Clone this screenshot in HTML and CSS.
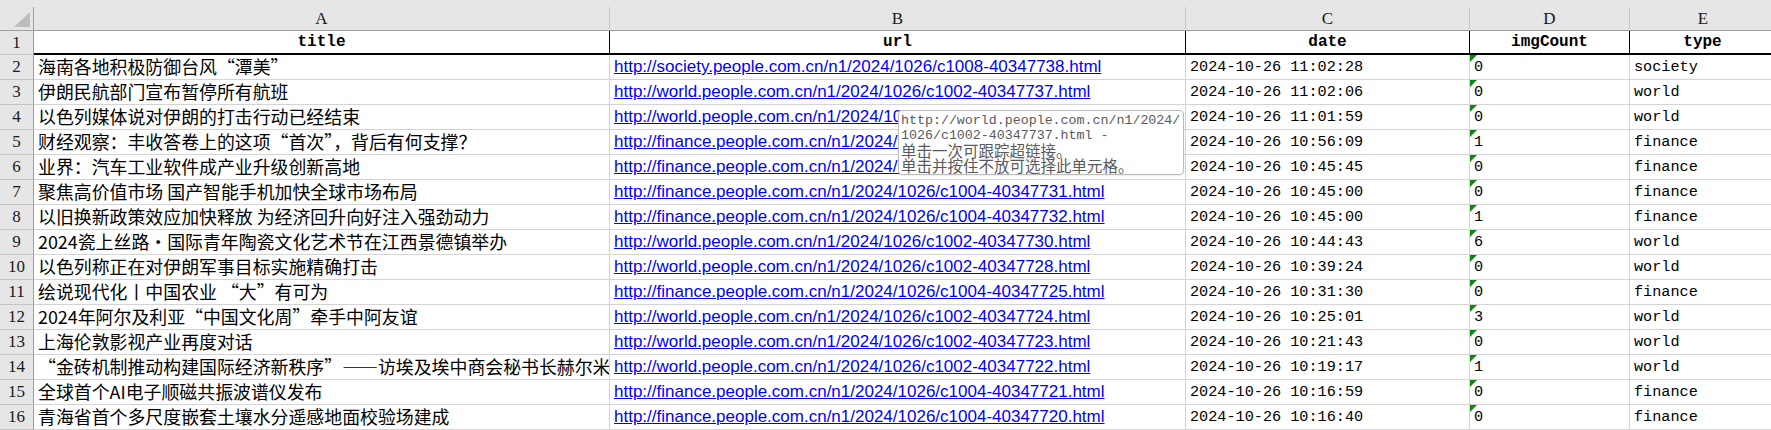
FILE: index.html
```html
<!DOCTYPE html>
<html lang="zh-CN">
<head>
<meta charset="utf-8">
<title>sheet</title>
<link rel="stylesheet" href="styles.css">
</head>
<body>
<div class="band"></div>
<div class="sheet">
  <div class="corner"><svg width="34" height="23" viewBox="0 0 34 23"><polygon points="14,20 30,20 30,5" fill="#bdbdbd"/></svg></div>
  <div class="colhead">A</div>
  <div class="colhead">B</div>
  <div class="colhead">C</div>
  <div class="colhead">D</div>
  <div class="colhead last">E</div>

  <div class="rowhead r1">1</div>
  <div class="hcell">title</div>
  <div class="hcell">url</div>
  <div class="hcell">date</div>
  <div class="hcell">imgCount</div>
  <div class="hcell">type</div>

  <div class="rowhead">2</div>
  <div class="cell t">海南各地积极防御台风“潭美”</div>
  <div class="cell u"><a>http://society.people.com.cn/n1/2024/1026/c1008-40347738.html</a></div>
  <div class="cell m">2024-10-26 11:02:28</div>
  <div class="cell m n">0</div>
  <div class="cell m">society</div>

  <div class="rowhead">3</div>
  <div class="cell t">伊朗民航部门宣布暂停所有航班</div>
  <div class="cell u"><a>http://world.people.com.cn/n1/2024/1026/c1002-40347737.html</a></div>
  <div class="cell m">2024-10-26 11:02:06</div>
  <div class="cell m n">0</div>
  <div class="cell m">world</div>

  <div class="rowhead">4</div>
  <div class="cell t">以色列媒体说对伊朗的打击行动已经结束</div>
  <div class="cell u"><a>http://world.people.com.cn/n1/2024/1026/c1002-40347736.html</a></div>
  <div class="cell m">2024-10-26 11:01:59</div>
  <div class="cell m n">0</div>
  <div class="cell m">world</div>

  <div class="rowhead">5</div>
  <div class="cell t">财经观察：丰收答卷上的这项“首次”，背后有何支撑？</div>
  <div class="cell u"><a>http://finance.people.com.cn/n1/2024/1026/c1004-40347735.html</a></div>
  <div class="cell m">2024-10-26 10:56:09</div>
  <div class="cell m n">1</div>
  <div class="cell m">finance</div>

  <div class="rowhead">6</div>
  <div class="cell t">业界：汽车工业软件成产业升级创新高地</div>
  <div class="cell u"><a>http://finance.people.com.cn/n1/2024/1026/c1004-40347734.html</a></div>
  <div class="cell m">2024-10-26 10:45:45</div>
  <div class="cell m n">0</div>
  <div class="cell m">finance</div>

  <div class="rowhead">7</div>
  <div class="cell t">聚焦高价值市场 国产智能手机加快全球市场布局</div>
  <div class="cell u"><a>http://finance.people.com.cn/n1/2024/1026/c1004-40347731.html</a></div>
  <div class="cell m">2024-10-26 10:45:00</div>
  <div class="cell m n">0</div>
  <div class="cell m">finance</div>

  <div class="rowhead">8</div>
  <div class="cell t">以旧换新政策效应加快释放 为经济回升向好注入强劲动力</div>
  <div class="cell u"><a>http://finance.people.com.cn/n1/2024/1026/c1004-40347732.html</a></div>
  <div class="cell m">2024-10-26 10:45:00</div>
  <div class="cell m n">1</div>
  <div class="cell m">finance</div>

  <div class="rowhead">9</div>
  <div class="cell t">2024瓷上丝路·国际青年陶瓷文化艺术节在江西景德镇举办</div>
  <div class="cell u"><a>http://world.people.com.cn/n1/2024/1026/c1002-40347730.html</a></div>
  <div class="cell m">2024-10-26 10:44:43</div>
  <div class="cell m n">6</div>
  <div class="cell m">world</div>

  <div class="rowhead">10</div>
  <div class="cell t">以色列称正在对伊朗军事目标实施精确打击</div>
  <div class="cell u"><a>http://world.people.com.cn/n1/2024/1026/c1002-40347728.html</a></div>
  <div class="cell m">2024-10-26 10:39:24</div>
  <div class="cell m n">0</div>
  <div class="cell m">world</div>

  <div class="rowhead">11</div>
  <div class="cell t">绘说现代化丨中国农业 “大”有可为</div>
  <div class="cell u"><a>http://finance.people.com.cn/n1/2024/1026/c1004-40347725.html</a></div>
  <div class="cell m">2024-10-26 10:31:30</div>
  <div class="cell m n">0</div>
  <div class="cell m">finance</div>

  <div class="rowhead">12</div>
  <div class="cell t">2024年阿尔及利亚“中国文化周”牵手中阿友谊</div>
  <div class="cell u"><a>http://world.people.com.cn/n1/2024/1026/c1002-40347724.html</a></div>
  <div class="cell m">2024-10-26 10:25:01</div>
  <div class="cell m n">3</div>
  <div class="cell m">world</div>

  <div class="rowhead">13</div>
  <div class="cell t">上海伦敦影视产业再度对话</div>
  <div class="cell u"><a>http://world.people.com.cn/n1/2024/1026/c1002-40347723.html</a></div>
  <div class="cell m">2024-10-26 10:21:43</div>
  <div class="cell m n">0</div>
  <div class="cell m">world</div>

  <div class="rowhead">14</div>
  <div class="cell t">“金砖机制推动构建国际经济新秩序”——访埃及埃中商会秘书长赫尔米</div>
  <div class="cell u"><a>http://world.people.com.cn/n1/2024/1026/c1002-40347722.html</a></div>
  <div class="cell m">2024-10-26 10:19:17</div>
  <div class="cell m n">1</div>
  <div class="cell m">world</div>

  <div class="rowhead">15</div>
  <div class="cell t">全球首个AI电子顺磁共振波谱仪发布</div>
  <div class="cell u"><a>http://finance.people.com.cn/n1/2024/1026/c1004-40347721.html</a></div>
  <div class="cell m">2024-10-26 10:16:59</div>
  <div class="cell m n">0</div>
  <div class="cell m">finance</div>

  <div class="rowhead">16</div>
  <div class="cell t">青海省首个多尺度嵌套土壤水分遥感地面校验场建成</div>
  <div class="cell u"><a>http://finance.people.com.cn/n1/2024/1026/c1004-40347720.html</a></div>
  <div class="cell m">2024-10-26 10:16:40</div>
  <div class="cell m n">0</div>
  <div class="cell m">finance</div>
</div>
<div class="tip">
  <div class="tl">http://world.people.com.cn/n1/2024/</div>
  <div class="tl">1026/c1002-40347737.html -</div>
  <div class="tc">单击一次可跟踪超链接。</div>
  <div class="tc">单击并按住不放可选择此单元格。</div>
</div>
</body>
</html>
```
FILE: styles.css
```css
html, body {
  margin: 0;
  padding: 0;
  background: #ffffff;
  overflow: hidden;
  width: 1771px;
  height: 430px;
}
body {
  position: relative;
}
.band {
  height: 7px;
  background: #e6e6e6;
}
.sheet {
  display: grid;
  grid-template-columns: 34px 576px 576px 284px 160px 146px;
  grid-template-rows: 24px 24px repeat(15, 25px);
}
.sheet > div {
  box-sizing: border-box;
  overflow: hidden;
  white-space: nowrap;
}
.corner {
  background: #e6e6e6;
  border-right: 1px solid #9e9e9e;
  border-bottom: 1px solid #9e9e9e;
}
.corner svg {
  display: block;
}
.colhead {
  background: #e6e6e6;
  border-right: 1px solid #c6c6c6;
  border-bottom: 1px solid #9e9e9e;
  text-align: center;
  font-family: "Liberation Serif", serif;
  font-size: 17px;
  line-height: 23px;
  color: #1a1a1a;
}
.colhead.last {
  border-right: 0;
}
.rowhead {
  background: #e6e6e6;
  border-right: 1px solid #9e9e9e;
  border-bottom: 1px solid #c6c6c6;
  text-align: center;
  font-family: "Liberation Serif", serif;
  font-size: 17px;
  line-height: 24px;
  color: #1a1a1a;
}
.rowhead.r1 {
  line-height: 23px;
}
.hcell {
  border-right: 1px solid #000000;
  border-bottom: 2px solid #000000;
  text-align: center;
  font-family: "Liberation Mono", monospace;
  font-weight: bold;
  font-size: 16px;
  line-height: 22px;
  color: #000000;
}
.cell {
  border-right: 1px solid #d4d4d4;
  border-bottom: 1px solid #d4d4d4;
  padding: 0 3px 0 4px;
  line-height: 24px;
  color: #000000;
  position: relative;
}
.cell.t {
  font-family: "Noto Sans CJK SC", sans-serif;
  font-size: 17.9px;
  line-height: 23px;
}
.cell.u {
  font-family: "Liberation Sans", Arial, sans-serif;
  font-size: 17px;
}
.cell.u a {
  color: #0000ff;
  text-decoration: underline;
}
.cell.m {
  font-family: "Liberation Mono", monospace;
  font-size: 15.2px;
}
.cell.n::before {
  content: "";
  position: absolute;
  left: 0;
  top: 0;
  width: 0;
  height: 0;
  border-top: 7px solid #128512;
  border-right: 7px solid transparent;
}
.tip {
  position: absolute;
  left: 898px;
  top: 110px;
  width: 286px;
  height: 65px;
  box-sizing: border-box;
  background: #ffffff;
  border: 1px solid #bcbcbc;
  border-radius: 4px;
  padding: 2px 0 0 2px;
  color: #5a5a5a;
  box-shadow: 0 1px 2px rgba(0,0,0,0.08);
}
.tl {
  font-family: "Liberation Mono", monospace;
  font-size: 13.3px;
  line-height: 15px;
}
.tc {
  font-family: "Noto Sans CJK SC", sans-serif;
  font-size: 15.5px;
  line-height: 15px;
}
```
